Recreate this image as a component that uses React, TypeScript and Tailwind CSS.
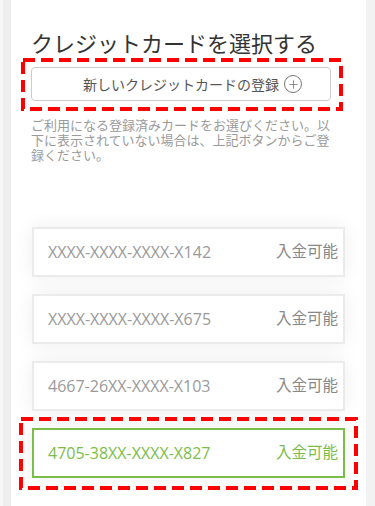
import { Plus } from 'lucide-react';

const cards = [
  { id: 1, number: 'XXXX-XXXX-XXXX-X142', selected: false },
  { id: 2, number: 'XXXX-XXXX-XXXX-X675', selected: false },
  { id: 3, number: '4667-26XX-XXXX-X103', selected: false },
  { id: 4, number: '4705-38XX-XXXX-X827', selected: true },
];

// red dashed highlight drawn over content
const DashedBox = ({ w, h, className }: { w: number; h: number; className: string }) => (
  <svg className={`pointer-events-none absolute ${className}`} width={w} height={h}>
    <rect x={2} y={2} width={w - 4} height={h - 4} fill="none" stroke="#ff0000" strokeWidth={4} strokeDasharray="12 6" />
  </svg>
);

const App = () => {
  return (
    <div
      className="flex h-[506px] overflow-hidden bg-[#f0f0f0]"
      style={{ fontFamily: "'Open Sans', 'Noto Sans CJK JP', sans-serif" }}
    >
      {/* left gutter */}
      <div className="flex w-[11px] shrink-0">
        <div className="w-[3px] bg-[#f6f6f6]" />
        <div className="flex-1 bg-[#eeeeee]" />
      </div>

      {/* Panel */}
      <div className="w-[355px] shrink-0 bg-white pl-[20px]">
        <h1 className="pt-[28px] text-[22px] leading-[30px] font-normal text-[#333333]">
          クレジットカードを選択する
        </h1>

        {/* Register button */}
        <div className="relative mt-[9px] w-[300px]">
          <button className="flex h-[34px] w-full items-center justify-center rounded-[4px] border border-[#cccccc] bg-white text-[14px] text-[#555555]">
            <span className="relative">
              新しいクレジットカードの登録
              <span className="absolute top-1/2 left-full ml-[5px] flex h-[18px] w-[18px] -translate-y-1/2 items-center justify-center rounded-full border border-[#777777]">
                <Plus className="h-[13px] w-[13px] text-[#777777]" strokeWidth={1.5} />
              </span>
            </span>
          </button>
          <DashedBox w={322} h={53} className="-top-[9px] -left-[10px]" />
        </div>

        <p className="mt-[17px] w-[300px] text-[13px] leading-[15px] text-[#9a9a9a]">
          ご利用になる登録済みカードをお選びください。以下に表示されていない場合は、上記ボタンからご登録ください。
        </p>

        {/* Card list */}
        <div className="mt-[64px] ml-[1px] flex w-[313px] flex-col gap-[17px]">
          {cards.map((card) => (
            <div key={card.id} className="relative">
              <div
                className={`flex h-[50px] items-center justify-between border-2 bg-white pr-[5px] pl-[14px] shadow-[0_0_20px_rgba(0,0,0,0.07)] ${
                  card.selected ? 'border-[#7cbd4a]' : 'border-[#ebebeb]'
                }`}
              >
                <span className={`text-[16px] ${card.selected ? 'text-[#7cbd4a]' : 'text-[#9a9a9a]'}`}>
                  {card.number}
                </span>
                <span className={`text-[15.5px] ${card.selected ? 'text-[#7cbd4a]' : 'text-[#888888]'}`}>
                  入金可能
                </span>
              </div>
              {card.selected && <DashedBox w={339} h={73} className="-top-[11px] -left-[13px]" />}
            </div>
          ))}
        </div>
      </div>

      {/* right gutter */}
      <div className="flex-1 bg-[#f2f2f2]" />
    </div>
  );
};

export default App;
